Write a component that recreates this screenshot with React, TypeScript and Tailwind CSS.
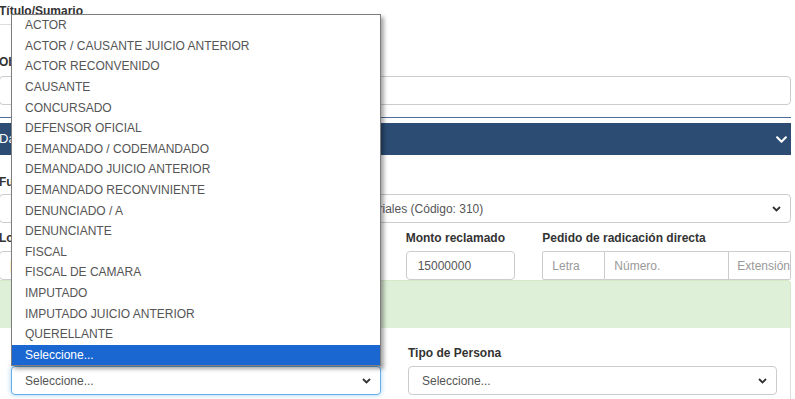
import React from "react";
import { FaChevronDown } from "react-icons/fa";

const opciones = [
  "ACTOR",
  "ACTOR / CAUSANTE JUICIO ANTERIOR",
  "ACTOR RECONVENIDO",
  "CAUSANTE",
  "CONCURSADO",
  "DEFENSOR OFICIAL",
  "DEMANDADO / CODEMANDADO",
  "DEMANDADO JUICIO ANTERIOR",
  "DEMANDADO RECONVINIENTE",
  "DENUNCIADO / A",
  "DENUNCIANTE",
  "FISCAL",
  "FISCAL DE CAMARA",
  "IMPUTADO",
  "IMPUTADO JUICIO ANTERIOR",
  "QUERELLANTE",
  "Seleccione...",
];

const Caret: React.FC = () => (
  <svg width="9" height="6" viewBox="0 0 9 6" className="shrink-0">
    <polyline points="1,1 4.5,4.5 8,1" fill="none" stroke="#333" strokeWidth="1.8" />
  </svg>
);

const Label: React.FC<{ children: React.ReactNode }> = ({ children }) => (
  <div className="h-[14px] leading-[14px] font-bold text-[12px] text-[#333] whitespace-nowrap">{children}</div>
);

const Select: React.FC<{ value: string; focus?: boolean; className?: string }> = ({ value, focus, className }) => (
  <div
    className={`h-[29px] flex items-center justify-between pl-[13px] pr-[9px] rounded-[4px] border bg-white text-[#555] whitespace-nowrap overflow-hidden ${
      focus ? "border-[#66afe9] shadow-[0_0_5px_rgba(102,175,233,0.6)]" : "border-[#ccc]"
    } ${className ?? ""}`}
  >
    <span>{value}</span>
    <Caret />
  </div>
);

const App: React.FC = () => {
  return (
    <div className="relative w-[795px] h-[399px] overflow-hidden bg-white font-['Liberation_Sans',Arial,sans-serif] text-[12px] text-[#333]">
      <div className="-ml-px w-[792px] pt-[4px]">
        {/* Título / Sumario */}
        <Label>Título/Sumario</Label>
        <div className="mt-[6px] h-[28px] w-[380px] border-t border-[#ddd]" />

        {/* Observaciones */}
        <div className="mt-[3px]">
          <Label>Observaciones</Label>
        </div>
        <div className="mt-[7px] h-[29px] rounded-[4px] border border-[#ccc] bg-white" />

        {/* Datos del expediente */}
        <div className="mt-[12px] border-t border-[#4f6f99] pt-[5px]">
          <div className="h-[32px] bg-[#2c4c74] flex items-center justify-between pr-[3px] text-white text-[13px]">
            <span>Datos del expediente</span>
            <FaChevronDown size={13} />
          </div>
        </div>

        <div className="mt-[20px]">
          <Label>Fuero / Materia</Label>
        </div>
        <div className="mt-[5px]">
          <Select value="Daños y perjuicios por accidentes de tránsito, lesiones o daños materiales (Código: 310)" className="pr-[6px]" />
        </div>

        <div className="mt-[8px] flex">
          <div className="w-[382px]">
            <Label>Localidad</Label>
            <div className="mt-[6px] h-[29px] rounded-[4px] border border-[#ccc] bg-white flex items-center pl-[10px] text-[#c0874d]">
              |
            </div>
          </div>
          <div className="ml-[26px] w-[110px]">
            <Label>Monto reclamado</Label>
            <div className="mt-[6px] h-[29px] rounded-[4px] border border-[#ccc] bg-white flex items-center pl-[11px] text-[#555]">
              15000000
            </div>
          </div>
          <div className="ml-[27px] flex-1">
            <Label>Pedido de radicación directa</Label>
            <div className="mt-[6px] h-[29px] flex text-[#999]">
              <div className="w-[63px] border border-[#ccc] rounded-l-[2px] flex items-center pl-[9px]">Letra</div>
              <div className="w-[124px] border-y border-r border-[#ccc] flex items-center pl-[9px]">Número.</div>
              <div className="flex-1 border-y border-r border-[#ccc] rounded-r-[2px] flex items-center pl-[8px] overflow-hidden whitespace-nowrap">
                Extensión
              </div>
            </div>
          </div>
        </div>

        {/* Partes */}
        <div className="h-[48px] bg-[#dff0d8] border-t border-r border-[#d6e9c6] rounded-tr-[4px]" />
        <div className="border-r border-[#ddd] pl-[12px] pr-[13px] pt-[18px] pb-[8px] flex gap-[27px]">
          <div className="w-[370px]">
            <div className="h-[14px]" />
            <div className="mt-[6px]">
              <Select value="Seleccione..." focus />
            </div>
          </div>
          <div className="flex-1">
            <Label>Tipo de Persona</Label>
            <div className="mt-[6px]">
              <Select value="Seleccione..." />
            </div>
          </div>
        </div>
      </div>

      {/* Lista desplegada del select */}
      <div className="absolute left-[11px] top-[14px] w-[370px] border border-[#7d7d7d] bg-white shadow-[3px_3px_4px_rgba(0,0,0,0.35)]">
        {opciones.map((op, i) => (
          <div
            key={op}
            className={`h-[20.6px] flex items-center pl-[13px] whitespace-nowrap ${
              i === opciones.length - 1 ? "bg-[#1a67d2] text-white" : "text-[#555]"
            }`}
          >
            {op}
          </div>
        ))}
      </div>
    </div>
  );
};

export default App;
